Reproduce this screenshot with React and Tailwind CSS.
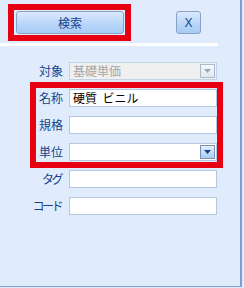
const jp = { fontFamily: '"Noto Sans CJK JP", "Noto Sans", sans-serif' }

function Arrow({ dark }) {
  return (
    <svg width="7" height="4" viewBox="0 0 7 4">
      <path d="M0 0h7L3.5 4z" fill={dark ? '#15428b' : '#9aa7b8'} />
    </svg>
  )
}

function Field({ label, value, combo, disabled, tight }) {
  return (
    <div className="flex items-center h-[18px]">
      <div className="w-[27px] shrink-0 flex justify-end">
        <span className={`text-[12px] leading-none text-[#15428b] whitespace-nowrap ${tight ? 'tracking-[-2.5px] pr-[2px]' : ''}`}>{label}</span>
      </div>
      <div className={`ml-[6px] w-[148px] h-[18px] flex items-center border ${disabled ? 'bg-[#f0f0f0] border-[#c3d2e4]' : 'bg-white border-[#b5c8e2]'}`}>
        <span className={`flex-1 pl-[3px] text-[12px] leading-none whitespace-nowrap ${disabled ? 'text-[#a6a6a6]' : 'text-black'}`}>{value}</span>
        {combo && (
          <div className={`w-[15px] h-[14px] mr-[1px] flex items-center justify-center border ${disabled ? 'border-[#a9b9cf] bg-gradient-to-b from-[#f6f8fb] to-[#e3e8ee]' : 'border-[#7d8fb0] bg-gradient-to-b from-[#e4effd] to-[#a9cbf3]'}`}>
            <Arrow dark={!disabled} />
          </div>
        )}
      </div>
    </div>
  )
}

export default function App() {
  return (
    <div className="w-[244px] h-[288px] bg-[#e0ebfb]" style={jp}>
      <div className="w-[242px] h-[287px] bg-[#e0ecfc] border-r-2 border-b border-[#7d9fd3] flex flex-col">
        <div className="flex items-start pt-[4px] pl-[8px]">
          <div className="w-[123px] h-[37px] border-[6px] border-[#e60012] pt-[1px] pl-[2px]">
            <button className="w-[108px] h-[23px] rounded-[3px] border border-[#8aa0c4] bg-gradient-to-b from-[#dceafc] via-[#bcd8fa] to-[#a7cbf5] text-[12px] text-[#15428b] flex items-center justify-center">
              検索
            </button>
          </div>
          <button className="ml-[45px] mt-[7px] w-[25px] h-[23px] rounded-[3px] border border-[#8aa0c4] bg-gradient-to-b from-[#dceafc] via-[#bcd8fa] to-[#a7cbf5] text-[12px] leading-none text-[#15428b] flex items-center justify-center" style={{ fontFamily: '"Liberation Sans", sans-serif' }}>
            X
          </button>
        </div>
        <div className="mt-[2px] h-[3px] w-[218px] bg-white" />

        <div className="ml-[30px] w-[193px] mt-[16px] flex flex-col">
          <div className="px-[6px]">
            <Field label="対象" value="基礎単価" combo disabled />
          </div>
          <div className="mt-[2px] border-[6px] border-[#e60012] pt-[1px] pb-[1px] flex flex-col gap-[9px]">
            <Field label="名称" value="硬質&nbsp;&nbsp;ビニル" />
            <Field label="規格" value="" />
            <Field label="単位" value="" combo />
          </div>
          <div className="px-[6px] mt-[2px] flex flex-col gap-[9px]">
            <Field label="タグ" value="" tight />
            <Field label="コード" value="" tight />
          </div>
        </div>
      </div>
    </div>
  )
}
